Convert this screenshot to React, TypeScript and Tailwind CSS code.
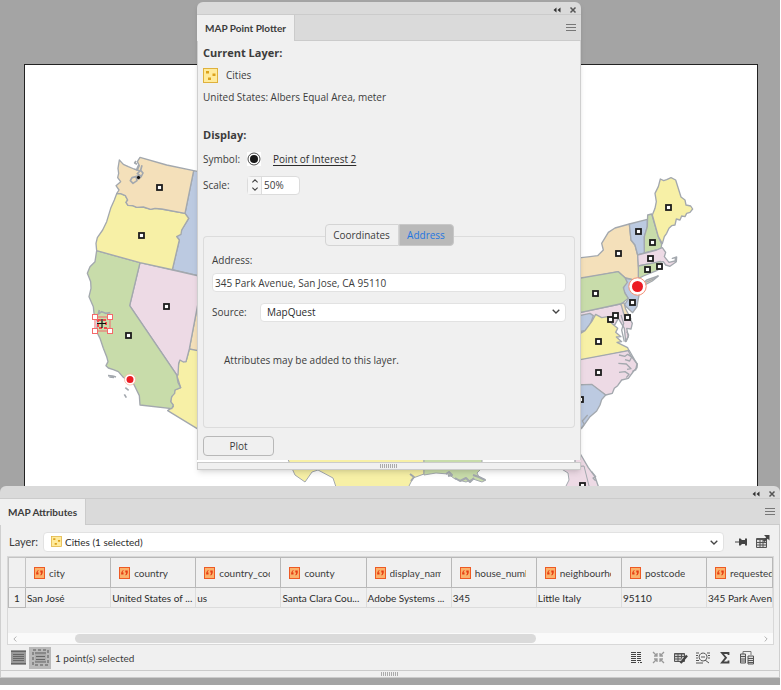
import { useState } from 'react';

const OUTLINE = '#a3a8ae';
const TAN = '#f4e0ba';
const YELLOW = '#f7f0a6';
const BLUE = '#bccae1';
const GREEN = '#c8dcaa';
const PINK = '#eddae5';

interface Shape {
	fill: string;
	d: string;
}

const WEST: Shape[] = [
	{ fill: BLUE, d: 'M341 77L370 83V396L277 374L298 285L290 275L305 255L326 220L315 205Z' },
	{ fill: TAN, d: 'M352 485L370 488V625L328 612Z' },
	{ fill: YELLOW, d: 'M328 612L370 620V862L263 797L280 785L272 770L275 755L285 735L302 728L290 690L296 655L300 645L318 650Z' },
	{ fill: PINK, d: 'M180 353L370 396V400L352 485L328 612L318 650L310 651L300 645L296 655L294 690H290L149 482Z' },
	{ fill: GREEN, d: 'M50 317L180 353L149 482L290 690L294 712L302 728L285 735L284 745L275 755L272 770L280 780L275 791L180 780L178 752L160 715L145 708L128 695L115 680L100 674L85 669L78 662L84 650L80 635L70 610L60 580L50 560L52 530L42 505L40 485L27 455L33 430L32 410L28 400L22 385L30 365L45 350Z' },
	{ fill: YELLOW, d: 'M110 146L122 146L136 152L143 165L138 172L144 181L158 182L170 187L190 186L212 193L225 190L245 192L315 205L326 220L305 255L303 268L290 275L298 285L277 374L180 353L50 317L48 295L52 278L68 255L80 230L92 190L103 165Z' },
	{ fill: TAN, d: 'M118 45L130 58L145 65L162 72L172 75L178 62L172 50L180 37L260 60L341 77L315 205L245 192L225 190L212 193L190 186L170 187L158 182L144 181L138 172L143 165L136 152L122 146H110L117 135L108 122L122 110L113 98L116 85L114 70Z' },
];

const EAST: Shape[] = [
	{ fill: TAN, d: 'M0 280L45 275L68 272L85 255L80 235L100 202L120 189L163 177L168 225L180 240L188 270L193 340L185 347L150 338L130 320L0 345Z' },
	{ fill: BLUE, d: 'M163 177L217 163V185L208 215L209 264L188 270L180 240L168 225Z' },
	{ fill: GREEN, d: 'M218 150L230 147L250 215L260 238L258 250L245 255L208 264L208 215L217 185Z' },
	{ fill: YELLOW, d: 'M256 42L266 47L275 44L288 38L302 45L318 96L330 105L333 120L347 123L353 132L345 142L335 145L330 155L320 153L315 165L304 162L300 180L290 182L282 190L275 205L268 215L262 236L250 215L232 150L240 130L244 110L240 85L250 65Z' },
	{ fill: PINK, d: 'M188 270L245 255L262 248L272 262L268 275L282 292L300 288L302 278L292 280L305 276L304 290L285 304L272 300L265 290L240 294L190 303Z' },
	{ fill: GREEN, d: 'M190 303L240 293L257 289L262 305L245 317L205 333L190 341Z' },
	{ fill: TAN, d: 'M200 358L215 345L250 333L232 348L205 362Z' },
	{ fill: BLUE, d: 'M150 340L190 347L195 375L188 412L186 425L173 443L148 420L160 402L145 375Z' },
	{ fill: PINK, d: 'M0 446L135 417L145 425L172 475L168 492L155 490L160 515L152 530L148 490L130 460L120 478L0 480Z' },
	{ fill: BLUE, d: 'M0 455L45 445L55 452L45 480L30 497L0 502Z' },
	{ fill: YELLOW, d: 'M0 515L30 497L50 470L62 448L80 458L98 455L110 475L128 490L122 502L138 515L124 516L140 530L126 532L158 548L162 557L0 590Z' },
	{ fill: TAN, d: 'M138 417L147 413L152 432L168 462L150 460Z' },
	{ fill: GREEN, d: 'M0 342L130 320L150 338L157 352L145 368L150 385L160 400L145 412L135 417L0 446Z' },
	{ fill: PINK, d: 'M0 587L160 557L166 570L187 597L186 608L176 618L160 640L140 645L128 662L118 670L112 685L92 690L50 660L0 662Z' },
	{ fill: BLUE, d: 'M0 660L50 658L92 690L80 704L75 720L65 738L45 755L20 790L0 800Z' },
	{ fill: PINK, d: 'M0 840L18 870L40 908L60 935L72 970H0Z' },
];

const SOUTH: Shape[] = [
	{ fill: YELLOW, d: 'M286 455H424V474L413 478L407 490H337L333 478L318 470L312 472L305 482L295 475Z' },
	{ fill: GREEN, d: 'M424 455H482V468L477 473L479 477L486 480L482 482L473 479L466 482L455 479L448 474L436 473L424 475Z' },
	{ fill: PINK, d: 'M560 468L584 466L590 490H564L569 480L568 473Z' },
];

const CAPITALS = [
	[159, 187], [141, 235], [166, 306], [128, 335], [668, 207], [638, 231], [652, 242], [618, 253],
	[650, 258], [647, 269], [659, 266], [595, 293], [632, 302], [610, 319], [615, 315], [627, 317],
	[598, 341], [598, 372], [580, 399], [582, 485],
];

const HANDLES = [[95, 317], [110, 317], [95, 331], [110, 331]];

const Shapes = ({ shapes }: { shapes: Shape[] }) => (
	<>
		{shapes.map(s => (
			<path key={s.d} d={s.d} fill={s.fill} />
		))}
	</>
);

const StateMap = () => (
	<svg viewBox="25 65 732 421" className="block w-full" aria-label="United States map">
		<g stroke={OUTLINE} strokeWidth="4" strokeLinejoin="round">
			<g transform="translate(80 145) scale(.33333)">
				<Shapes shapes={WEST} />
				<path d="M168 48l-4 6 7 4M176 60l-6 14 10 4-8 8 9 6-11 2-14 4-5 9 8 8 12-8-2-9 14-2 6-12-7-8 4-15M58 495l-3 12 10-7 12 5 14-2M84 692l14 1 10 3M88 696l14 1M136 728l10 8M133 748l6 10" fill="none" strokeWidth="5" />
			</g>
			<g transform="translate(575 165) scale(.33333)">
				<Shapes shapes={EAST} />
				<path d="M212 352l28-12 9-8M138 450l8 25-6 20 8 35M155 500l6 10-8 20M132 570l18 4 8-6 12 8-6 12-14-4M130 595l24 2 14 14-12 2M132 622l18-2 12 8-8 10M162 555l24 42-4 18-10 4M38 750l-16 18 6 10-10 12M50 920l12 15-8 4 8 8" fill="none" strokeWidth="4" />
			</g>
		</g>
		<g stroke={OUTLINE} strokeLinejoin="round">
			<Shapes shapes={SOUTH} />
			<path d="M410 474l4 3-3 4M446 474l3-2 3 3-4 1M455 478l5 3 6-3 4 4 4-4M473 475l6 2 6 3" fill="none" strokeWidth="2" />
		</g>
		<circle cx="138.5" cy="177.5" r="2" fill="#111" stroke="#ddd" strokeWidth=".5" />
		{CAPITALS.map(([x, y]) => (
			<rect key={`${x}-${y}`} x={x - 2} y={y - 2} width="5" height="5" fill="#fff" stroke="#1c1c1c" strokeWidth="1.8" />
		))}
		<circle cx="130" cy="379.500" r="5.500" fill="#fff" stroke="#f6b296" strokeWidth=".7" />
		<circle cx="130" cy="379.500" r="3.500" fill="#ec1c24" />
		<circle cx="637.500" cy="286.500" r="8.700" fill="#fff" stroke="#f28e74" strokeWidth="1" />
		<circle cx="637.500" cy="286.500" r="5.500" fill="#ec1c24" />
		<rect x="95" y="317" width="15" height="14" fill="none" stroke="#f4696b" />
		<path d="M98 320h8v8h-8z" fill="none" stroke="#f4494b" strokeWidth="2" strokeDasharray="3 2" />
		<path d="M97 323.500h9M102 319v9" stroke="#111" strokeWidth="1.200" />
		{HANDLES.map(([x, y]) => (
			<rect key={`${x}-${y}`} x={x - 2.5} y={y - 2.5} width="5" height="5" fill="#fff" stroke="#f4696b" />
		))}
	</svg>
);

const LayerIcon = () => (
	<svg viewBox="0 0 15 15" className="size-full">
		<rect x=".5" y=".5" width="14" height="14" fill="#ffeb9c" stroke="#dfb13c" />
		<path d="M3 3h3v2.500H3zM9.500 5.500h3V8h-3zM5 9.500h3V12H5z" fill="#dca21c" />
	</svg>
);

const TextFieldIcon = () => (
	<svg viewBox="0 0 11 12" className="h-3 w-[11px] shrink-0">
		<rect x=".5" y=".5" width="10" height="11" fill="#fbb26c" stroke="#ee5a24" />
		<path d="M4.500 3C2.500 4 2 5.500 2.200 7.500h2.300V5.600h-1C3.600 4.600 4 4 4.700 3.600zM6.300 3.500v2h1c0 1-.4 1.700-1 2.200l.4.800C8.500 7.500 9 6 8.700 3.500z" fill="#e63c12" />
	</svg>
);

const Chevron = ({ className }: { className: string }) => (
	<svg viewBox="0 0 8 5" className={className} fill="none" stroke="#444" strokeWidth="1.300">
		<path d="M.7.7L4 4 7.300.7" />
	</svg>
);

const TitleBar = ({ title }: { title: string }) => (
	<header>
		<div className="flex h-[13px] items-center justify-end gap-2 rounded-t-md border-b border-[#cbcbcb] bg-[#dadada] pr-1 pt-1">
			<button aria-label="Collapse" className="flex w-2 items-center">
				<svg viewBox="0 0 8 6" className="h-1.5 w-2" fill="#333"><path d="M3.500.5v5L.5 3zM7.500.5v5L4.500 3z" /></svg>
			</button>
			<button aria-label="Close" className="flex w-2 items-center">
				<svg viewBox="0 0 8 8" className="size-2" fill="none" stroke="#555" strokeWidth="1.500"><path d="M1.500 1.500l5 5M6.500 1.500l-5 5" /></svg>
			</button>
		</div>
		<div className="flex h-[26px] bg-[#dadada]">
			<h1 className="flex items-center border-r border-[#cbcbcb] bg-[#f0f0f0] px-2 font-['Lato',sans-serif] font-bold">{title}</h1>
			<div className="flex flex-1 items-center justify-end border-b border-[#cbcbcb] pr-[5px]">
				<button aria-label="Panel menu" className="flex">
					<svg viewBox="0 0 10 8" className="h-2 w-2.5" stroke="#777"><path d="M0 .5h10M0 3.500h10M0 6.500h10" /></svg>
				</button>
			</div>
		</div>
	</header>
);

const Grip = () => (
	<div className="flex h-2 items-center justify-center border border-[#cbcbcb] bg-[#f0f0f0]">
		<svg viewBox="0 0 18 4" className="h-1 w-[18px]" stroke="#aaa"><path d="M.5 0v4M2.500 0v4M4.500 0v4M6.500 0v4M8.500 0v4M10.500 0v4M12.500 0v4M14.500 0v4M16.500 0v4" /></svg>
	</div>
);

const PointPlotter = () => {
	const [address, setAddress] = useState('345 Park Avenue, San Jose, CA 95110');

	return (
		<section className="relative mx-auto w-96 shadow-md">
			<TitleBar title="MAP Point Plotter" />
			<div className="border-x border-[#cfcfcf] bg-[#f0f0f0] px-[5px] pb-1 pt-1">
				<h2 className="text-[11px] font-bold leading-4">Current Layer:</h2>
				<div className="mt-1.5 flex h-4 items-center gap-2">
					<span className="size-[15px]"><LayerIcon /></span>
					<span>Cities</span>
				</div>
				<p className="mt-1.5">United States: Albers Equal Area, meter</p>
				<h2 className="mt-[22px] text-[11px] font-bold leading-4">Display:</h2>
				<div className="mt-2 flex h-4 items-center">
					<span className="w-11">Symbol:</span>
					<svg viewBox="0 0 14 14" className="size-3.5">
						<rect width="14" height="14" fill="#fff" />
						<circle cx="7" cy="7" r="6" fill="#fff" stroke="#222" strokeWidth=".8" />
						<circle cx="7" cy="7" r="4" fill="#1a1a1a" />
					</svg>
					<a href="#" className="ml-3 text-[#2c2c2c] underline underline-offset-2">Point of Interest 2</a>
				</div>
				<div className="mt-2 flex h-5 items-center">
					<label htmlFor="scale" className="w-11">Scale:</label>
					<div className="flex h-[19px] w-[53px] rounded-sm border border-[#dcdcdc] bg-white">
						<div className="flex w-[14px] flex-col items-center justify-center gap-1 border-r border-[#dcdcdc] bg-[#f6f6f6]">
							<button aria-label="Increase" className="flex"><Chevron className="h-1 w-2 rotate-180" /></button>
							<button aria-label="Decrease" className="flex"><Chevron className="h-1 w-2" /></button>
						</div>
						<input id="scale" defaultValue="50%" className="w-9 bg-transparent pl-0.5 outline-none" />
					</div>
				</div>

				<div className="mt-[29px] flex items-center">
					<div className="h-2.5 flex-1 self-end rounded-tl-sm border-l border-t border-[#dcdcdc]"></div>
					<div className="flex h-[22px]">
						<button className="w-[74px] rounded-l-sm border border-[#d4d4d4]">Coordinates</button>
						<button className="w-[55px] rounded-r-sm border border-[#c8c8c8] bg-[#b9b9b9] text-[#1f76e0]">Address</button>
					</div>
					<div className="h-2.5 flex-1 self-end rounded-tr-sm border-r border-t border-[#dcdcdc]"></div>
				</div>
				<div className="rounded-b-sm border-x border-b border-[#dcdcdc] px-2 pb-[59px] pt-1.5">
					<label htmlFor="address" className="block">Address:</label>
					<input
						id="address"
						value={address}
						onChange={e => setAddress(e.target.value)}
						className="mt-[5px] block h-[19px] w-full rounded-sm border border-[#e2e2e2] bg-white px-0.5 outline-none"
					/>
					<div className="mt-2.5 flex h-5 items-center">
						<label htmlFor="source" className="w-12">Source:</label>
						<div className="relative flex-1">
							<select id="source" className="block h-[19px] w-full appearance-none rounded-sm border border-[#e2e2e2] bg-white px-1.5 text-[#2c2c2c] outline-none">
								<option>MapQuest</option>
							</select>
							<Chevron className="pointer-events-none absolute right-1.5 top-1.5 h-[5px] w-2" />
						</div>
					</div>
					<p className="ml-3 mt-[30px]">Attributes may be added to this layer.</p>
				</div>
				<button className="mt-2 block h-5 w-[71px] rounded-sm border border-[#b8b8b8]">Plot</button>
			</div>
			<div className="h-0.5"></div>
			<Grip />
		</section>
	);
};

const COLUMNS = [
	{ name: 'city', value: 'San José' },
	{ name: 'country', value: 'United States of ...' },
	{ name: 'country_code', value: 'us' },
	{ name: 'county', value: 'Santa Clara Cou...' },
	{ name: 'display_name', value: 'Adobe Systems ...' },
	{ name: 'house_number', value: '345' },
	{ name: 'neighbourhood', value: 'Little Italy' },
	{ name: 'postcode', value: '95110' },
	{ name: 'requested', value: '345 Park Avenu' },
];

const TOOLS = [
	{
		label: 'Columns',
		icon: <path d="M1 1.500h5M1 3.500h5M1 5.500h5M1 7.500h5M1 9.500h5M1 11.500h5M7 1.500h4M7 3.500h4M7 5.500h4M7 7.500h4M7 9.500h4M8 11.500h1M10 11.500h2" stroke="#444" />,
	},
	{
		label: 'Zoom to selected',
		icon: <path d="M1 1l4 4M5 2v3H2M12 1L8 5M8 2v3h3M1 12l4-4M2 8h3v3M12 12L8 8M11 8H8v3" stroke="#999" strokeWidth="1.300" />,
	},
	{
		label: 'Edit schema',
		icon: (
			<>
				<path d="M.5 2.500h10v8H.5z" fill="#ccc" stroke="#555" />
				<path d="M.5 3h10M.5 5.500h10M.5 8h7M4 2.500v8M7.500 2.500v5" stroke="#555" />
				<path d="M13 4.500l-5 6-1.500 1.500" stroke="#444" strokeWidth="2.400" />
			</>
		),
	},
	{
		label: 'Find',
		icon: <path d="M0 2h3M0 4.500h2M0 7h2M0 9.500h3M0 12h7M11 2h3M12 4.500h2M12 7h2M9 9l4 3M5 6h4M7 2a4 4 0 1 0 .1 0" stroke="#555" />,
	},
	{
		label: 'Statistics',
		icon: <path d="M10.500 4V2H4l4 4.700L4 11.500h6.500v-2" stroke="#444" strokeWidth="1.800" />,
	},
	{
		label: 'Join table',
		icon: (
			<>
				<path d="M3 3V.5h8V4" stroke="#777" />
				<path d="M.5 3h5v9h-5zM8 5h5.500v8H8z" fill="#ddd" stroke="#555" />
				<path d="M.5 5.500h5M.5 8h5M.5 10h5M8 7.500h5.500M8 9.500h5.500M8 11.500h5.500" stroke="#555" />
			</>
		),
	},
];

const Attributes = () => (
	<section className="relative font-['Lato',sans-serif]">
		<TitleBar title="MAP Attributes" />
		<div className="border-x border-[#cfcfcf] bg-[#f0f0f0] pl-1.5 pr-[5px] pt-[7px]">
			<div className="flex h-5 items-center pl-0.5 pr-1">
				<label htmlFor="layer" className="w-[34px] text-[11px]">Layer:</label>
				<div className="relative flex-1">
					<select id="layer" className="block h-5 w-full appearance-none rounded-sm border border-[#e2e2e2] bg-white pl-[21px] text-[#2c2c2c] outline-none">
						<option>Cities (1 selected)</option>
					</select>
					<span className="pointer-events-none absolute left-2 top-1 size-[11px]"><LayerIcon /></span>
					<Chevron className="pointer-events-none absolute right-1.5 top-2 h-[5px] w-2" />
				</div>
				<div className="flex items-center gap-2 pl-[11px]">
					<button aria-label="Pin" className="flex">
						<svg viewBox="0 0 13 12" className="h-3 w-[13px]" fill="#444"><path d="M0 5.500h4V2.500h1.500L7 4h3V2.500h2v7h-2V8H7L5.500 9.500H4v-3H0z" /></svg>
					</button>
					<button aria-label="Export table" className="flex">
						<svg viewBox="0 0 14 14" className="size-3.5" fill="none" stroke="#555"><path d="M.5 3.500h10v9H.5z" fill="#ddd" /><path d="M.5 4.500h8M.5 7.500h10M.5 10h10M4 5v7M7 5v7" /><path d="M8 0h5.500v5.500L11.700 3.700 8.500 7 7 5.500l3.200-3.300z" fill="#444" stroke="none" /></svg>
					</button>
				</div>
			</div>

			<div className="mt-1 h-[89px] border border-[#d8d8d8]">
				<table className="w-full table-fixed border-collapse">
					<colgroup>
						<col className="w-[17px]" />
						{COLUMNS.slice(0, 8).map(c => <col key={c.name} />)}
						<col className="w-[66px]" />
					</colgroup>
					<thead>
						<tr className="h-[30px]">
							<th className="border border-[#c4c4c4]"></th>
							{COLUMNS.map(c => (
								<th key={c.name} className="overflow-hidden border border-[#b8b8b8] p-0 pl-2 font-normal">
									<div className={c.name === 'requested' ? 'flex items-center gap-1' : 'flex items-center gap-1 pr-2.5'}>
										<TextFieldIcon />
										<span className="min-w-0 overflow-hidden whitespace-nowrap">{c.name}</span>
									</div>
								</th>
							))}
						</tr>
					</thead>
					<tbody>
						<tr className="h-5 text-[#2c2c2c]">
							<th className="border border-[#b8b8b8] p-0 font-normal">1</th>
							{COLUMNS.map(c => (
								<td key={c.name} className="overflow-hidden whitespace-nowrap border border-[#dcdcdc] p-0 pl-px">{c.value}</td>
							))}
						</tr>
					</tbody>
				</table>
				<div className="mt-[25px] flex h-[11px] items-center justify-between bg-[#fafafa] px-1">
					<Chevron className="h-1 w-1.5 rotate-90 opacity-40" />
					<div className="flex-1 px-[57px]"><div className="h-[9px] w-[73%] rounded-full bg-[#dadada]"></div></div>
					<Chevron className="h-1 w-1.5 -rotate-90 opacity-40" />
				</div>
			</div>

			<div className="flex h-[25px] items-center">
				<button aria-label="Show all" className="flex size-[22px] items-center justify-center">
					<svg viewBox="0 0 15 15" className="size-[15px]"><path d="M0 0h15v15H0z" fill="#999" /><path d="M0 1.500h15M0 13.500h15M2 4.500h11M2 6.500h11M2 8.500h11M2 10.500h11" stroke="#666" /></svg>
				</button>
				<button aria-label="Show selected" className="flex size-[22px] items-center justify-center bg-[#b9b9b9]">
					<svg viewBox="0 0 17 17" className="size-[17px]" fill="none"><path d="M1 1h15v15H1z" stroke="#888" strokeWidth="2" strokeDasharray="3 2" /><path d="M3 3h11v10H3z" fill="#aaa" /><path d="M3 4h11M4 7.500h9M4 10.500h9M3 13h11" stroke="#666" /></svg>
				</button>
				<span className="ml-1">1 point(s) selected</span>
				<div className="ml-auto flex gap-2 pr-5">
					{TOOLS.map(t => (
						<button key={t.label} aria-label={t.label} className="flex">
							<svg viewBox="0 0 14 14" className="size-3.5" fill="none">{t.icon}</svg>
						</button>
					))}
				</div>
			</div>
		</div>
		<Grip />
	</section>
);

export default function App() {
	return (
		<div className="min-h-screen bg-white pb-[5px] pr-px">
			<main className="bg-[#a4a4a4] pb-[7px] font-['Open_Sans','Noto_Sans',sans-serif] text-[10px] leading-4 text-[#3c3c3c]">
				<div className="relative pb-4 pr-0.5 pt-0.5">
					<div className="absolute bottom-0 left-6 right-[22px] top-16 overflow-hidden border border-b-0 border-[#222] bg-white">
						<StateMap />
					</div>
					<PointPlotter />
				</div>
				<Attributes />
			</main>
		</div>
	);
}
